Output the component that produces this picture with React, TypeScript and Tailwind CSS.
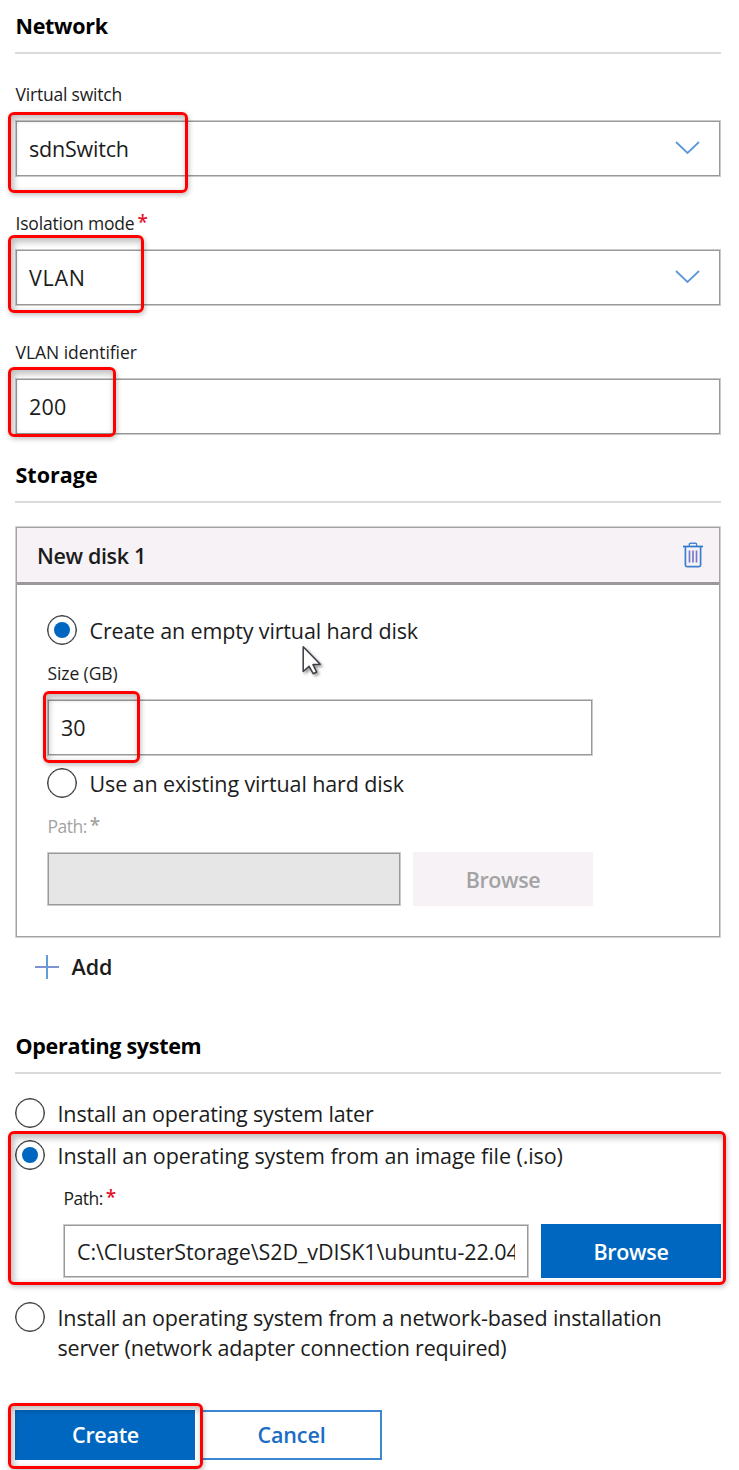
import type { ReactNode } from "react";

function Heading({ children, className }: { children: ReactNode; className?: string }) {
  return (
    <h2 className={`h-[54px] border-b-2 border-[#dadada] pl-[0.5px] text-[21.5px] leading-[52px] font-bold text-black ${className ?? ""}`}>
      {children}
    </h2>
  );
}

function Label({ children, className, required }: { children: ReactNode; className?: string; required?: string }) {
  return (
    <div className={`flex h-6 pl-[0.5px] text-[17.5px] leading-6 ${className ?? ""}`}>
      <span>{children}</span>
      {required && <span className={`ml-[3px] text-[19px] leading-[22px] font-semibold tracking-normal ${required}`}>*</span>}
    </div>
  );
}

function Highlight({ className }: { className: string }) {
  return (
    <div
      className={`pointer-events-none absolute z-10 rounded-[6px] border-[3px] border-[#fe0000] shadow-[1px_2px_5px_rgba(0,0,0,0.25),inset_2px_3px_6px_1px_rgba(0,0,0,0.25)] ${className}`}
    />
  );
}

function Field({ children, className }: { children?: ReactNode; className?: string }) {
  return (
    <div
      className={`flex items-center border border-[#cacaca] px-[13px] text-[21.5px] leading-[30px] shadow-[inset_0_0_0_1px_#999999] ${className ?? ""}`}
    >
      {children}
    </div>
  );
}

function Chevron() {
  return (
    <svg className="mr-[7px] mb-px ml-auto" width="25" height="14" viewBox="0 0 25 14" fill="none">
      <path d="M1 1 L12.5 12 L24 1" stroke="#5f97d8" strokeWidth="1.8" />
    </svg>
  );
}

function Radio({ checked, children, className, text }: { checked?: boolean; children: ReactNode; className?: string; text?: string }) {
  return (
    <div className={`flex gap-3 ${className ?? ""}`}>
      <span className="flex size-[30px] shrink-0 items-center justify-center rounded-full border-[1.5px] border-[#333] shadow-[inset_0_0_0_0.5px_#555]">
        {checked && <span className="size-4 rounded-full bg-[#0067c0]" />}
      </span>
      <span className={`mt-px -mb-px pl-[0.5px] text-[21.5px] leading-[30px] whitespace-nowrap ${text ?? ""}`}>{children}</span>
    </div>
  );
}

function TrashIcon() {
  return (
    <svg width="20" height="26" viewBox="0 0 20 26" fill="none">
      <path d="M0 4.5 H20" stroke="#2878cc" strokeWidth="1.7" />
      <path d="M6.3 4 V2.4 Q6.3 1.3 7.4 1.3 H12.6 Q13.7 1.3 13.7 2.4 V4" stroke="#4a86d0" strokeWidth="1.4" />
      <path d="M2.4 5 V23 Q2.4 24.6 4 24.6 H16 Q17.6 24.6 17.6 23 V5" stroke="#3f7fce" strokeWidth="1.7" />
      <path d="M6.5 8.5 V20.5 M10 8.5 V20.5 M13.5 8.5 V20.5" stroke="#7579c9" strokeWidth="1.7" />
    </svg>
  );
}

function Cursor() {
  return (
    <svg
      className="absolute top-[60px] left-[286px] z-10 drop-shadow-[2px_2px_1.5px_rgba(0,0,0,0.4)]"
      width="22"
      height="31"
      viewBox="0 0 22 31"
    >
      <path
        d="M1.2 1.8 V26.5 L7 21.2 L11.2 28.6 L14.6 27 L11 19.6 L18.2 19.2 Z"
        fill="#fff"
        stroke="#3c3c46"
        strokeWidth="1.5"
        strokeLinejoin="round"
      />
    </svg>
  );
}

export default function App() {
  return (
    <main className="h-[1470px] w-[739px] overflow-hidden bg-white pr-[18px] pl-[15px] font-['Open_Sans','Noto_Sans',sans-serif] text-[#1c1c1c]">
      <Heading className="tracking-[-0.3px]">Network</Heading>

      <Label className="mt-7 tracking-[-0.2px]">Virtual switch</Label>
      <div className="relative mt-3.5">
        <Highlight className="top-[-8px] left-[-7px] h-[81px] w-[180px]" />
        <Field className="h-[57px]">
          <span className="tracking-[-0.2px]">sdnSwitch</span>
          <Chevron />
        </Field>
      </div>

      <Label className="mt-[34px] tracking-[-0.19px]" required="text-[#e8112d]">Isolation mode</Label>
      <div className="relative mt-3.5">
        <Highlight className="top-[-14px] left-[-7px] h-[78px] w-[136px]" />
        <Field className="h-[57px]">
          <span className="tracking-[0.7px]">VLAN</span>
          <Chevron />
        </Field>
      </div>

      <Label className="mt-[34px] tracking-[-0.04px]">VLAN identifier</Label>
      <div className="relative mt-3.5">
        <Highlight className="top-[-11px] left-[-7px] h-[70px] w-[108px]" />
        <Field className="h-[57px]">
          <span className="tracking-[0.2px]">200</span>
        </Field>
      </div>

      <Heading className="mt-3.5">Storage</Heading>

      <section className="mt-[23px] h-[412px] border border-[#d2d2d2] shadow-[inset_0_0_0_1px_#a3a3a3]">
        <div className="mx-px mt-px flex h-[57px] items-start justify-between border-b-[3px] border-[#9c999b] bg-[#f6f2f6] pr-4 pl-5">
          <h3 className="pt-[13px] text-[21.5px] leading-[30px] font-semibold tracking-[-0.35px]">New disk 1</h3>
          <div className="pt-[14px]">
            <TrashIcon />
          </div>
        </div>
        <div className="relative px-[31px] pt-[30px]">
          <Cursor />
          <Radio checked text="tracking-[-0.14px]">Create an empty virtual hard disk</Radio>
          <Label className="mt-4 tracking-[-0.1px]">Size (GB)</Label>
          <div className="relative mt-3.5">
            <Highlight className="top-[-8px] left-[-4px] h-[72px] w-[97px]" />
            <Field className="h-[57px] w-[546px]">
              <span>30</span>
            </Field>
          </div>
          <Radio className="mt-3" text="tracking-[-0.12px]">Use an existing virtual hard disk</Radio>
          <Label className="mt-4 tracking-[-0.5px] text-[#a3a3a3]" required="text-[#a3a3a3]">Path:</Label>
          <div className="mt-3.5 flex gap-3">
            <Field className="h-[54px] w-[354px] bg-[#e6e6e6]" />
            <button className="h-[54px] w-[180px] bg-[#f6f2f6] pt-0.5 text-[21.5px] font-semibold tracking-[-0.4px] text-[#a3a3a3]">Browse</button>
          </div>
        </div>
      </section>

      <div className="mt-[13px] flex h-8 items-center gap-[12.5px] pl-5">
        <svg className="mb-px" width="24" height="24" viewBox="0 0 24 24">
          <path d="M0 12 H24" stroke="#7f92d2" strokeWidth="2" />
          <path d="M12 0 V24" stroke="#5f9cd8" strokeWidth="2" />
        </svg>
        <span className="text-[21.5px] leading-8 font-semibold">Add</span>
      </div>

      <Heading className="mt-[37px] tracking-[-0.3px]">Operating system</Heading>

      <Radio className="mt-6" text="tracking-[-0.15px]">Install an operating system later</Radio>

      <div className="relative mt-3">
        <Highlight className="top-[-9px] left-[-7px] h-[154px] w-[718px]" />
        <Radio checked className="h-[30px]" text="tracking-[-0.08px]">Install an operating system from an image file (.iso)</Radio>
        <Label className="mt-4 ml-12 tracking-[-0.5px]" required="text-[#e8112d]">Path:</Label>
        <div className="mt-3.5 ml-12 flex justify-between">
          <Field className="h-[54px] w-[466px]">
            <span className="overflow-hidden pt-px tracking-[-0.07px] whitespace-nowrap">C:\ClusterStorage\S2D_vDISK1\ubuntu-22.04</span>
          </Field>
          <button className="h-[54px] w-[180px] bg-[#0067c0] pt-0.5 text-[21.5px] font-semibold tracking-[-0.3px] text-white">Browse</button>
        </div>
      </div>

      <Radio className="mt-6" text="tracking-[-0.15px]">
        Install an operating system from a network-based installation
        <br />
        <span className="tracking-[-0.18px]">server (network adapter connection required)</span>
      </Radio>

      <div className="relative mt-12 flex gap-1.5">
        <Highlight className="top-[-7px] left-[-7px] h-[66px] w-[195px]" />
        <button className="h-[50px] w-[180px] bg-[#0067c0] pl-px text-[21.5px] font-semibold tracking-[-0.3px] text-white">Create</button>
        <button className="h-[50px] w-[181px] border-2 border-[#3b88d0] text-[21.5px] font-semibold tracking-[-0.1px] text-[#1a6cc4]">Cancel</button>
      </div>
    </main>
  );
}
